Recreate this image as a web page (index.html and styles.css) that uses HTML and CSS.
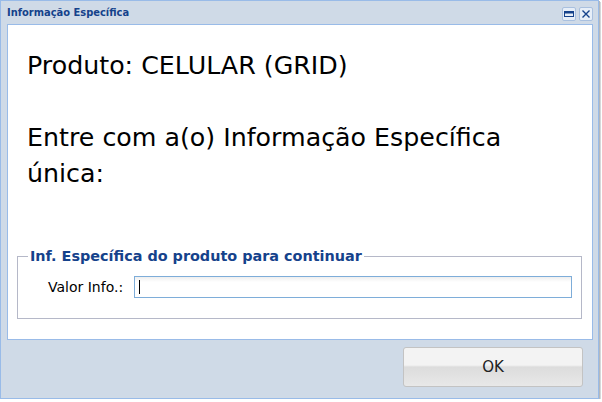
FILE: index.html
```html
<!DOCTYPE html>
<html>
<head>
<meta charset="utf-8">
<link rel="stylesheet" href="styles.css">
</head>
<body>
<div class="window">
  <div class="titlebar">
    <span class="title">Informação Específica</span>
    <div class="tools">
      <span class="tool"><svg width="12" height="12" viewBox="0 0 12 12"><rect x="1.5" y="3.5" width="9" height="5" fill="none" stroke="#15428b" stroke-width="1"/><rect x="1.5" y="3.5" width="9" height="2" fill="#15428b"/></svg></span>
      <span class="tool"><svg width="12" height="12" viewBox="0 0 12 12"><path d="M2.5 2.5 L9.5 9.5 M9.5 2.5 L2.5 9.5" stroke="#15428b" stroke-width="1.4" fill="none"/></svg></span>
    </div>
  </div>
  <div class="panel">
    <p class="big first">Produto: CELULAR (GRID)</p>
    <p class="big second">Entre com a(o) Informação Específica única:</p>
    <fieldset class="fs">
      <legend>Inf. Específica do produto para continuar</legend>
      <div class="row">
        <label class="lbl">Valor Info.:</label>
        <div class="input"><span class="caret"></span></div>
      </div>
    </fieldset>
  </div>
  <div class="footer">
    <button class="btn">OK</button>
  </div>
</div>
</body>
</html>
```
FILE: styles.css
```css
html, body {
  margin: 0;
  padding: 0;
  background: #ffffff;
}
.window {
  width: 599px;
  height: 399px;
  box-sizing: border-box;
  border: 1px solid #99bbe8;
  background: #cfdae7;
  display: flex;
  flex-direction: column;
  box-shadow: 1px 1px 0 #b4b8bd, 2px 2px 0 #d6d8da;
  font-family: "DejaVu Sans Condensed", "DejaVu Sans", sans-serif;
}
.titlebar {
  height: 23px;
  display: flex;
  align-items: center;
  justify-content: space-between;
  padding: 0 5px 0 6px;
}
.title {
  font-size: 11px;
  font-weight: bold;
  color: #15428b;
  margin-top: -1px;
}
.tools {
  display: flex;
  gap: 3px;
  margin-top: 2px;
}
.tool {
  width: 14px;
  height: 14px;
  box-sizing: border-box;
  border: 1px solid #a9c0df;
  border-radius: 2px;
  background: #e6eef8;
  display: flex;
  align-items: center;
  justify-content: center;
}
.tool svg { width: 12px; height: 12px; }
.panel {
  margin: 0 5px 0 6px;
  height: 316px;
  box-sizing: border-box;
  border: 1px solid #99bbe8;
  background: #ffffff;
  padding: 0 10px 0 9px;
  display: flex;
  flex-direction: column;
}
.big {
  margin: 0;
  padding-left: 10px;
  font-size: 25.3px;
  line-height: 36px;
  color: #000000;
  font-family: "DejaVu Sans", sans-serif;
}
.first { margin-top: 23px; }
.second { margin-top: 36px; width: 500px; }
.fs {
  margin: 56px 0 0 0;
  padding: 0;
  height: 71px;
  box-sizing: border-box;
  border: 1px solid #b5b8c8;
  min-width: 0;
  flex-shrink: 0;
}
.fs legend {
  font-family: "DejaVu Sans", sans-serif;
  font-size: 14.4px;
  font-weight: bold;
  color: #15428b;
  padding: 0 2px;
  margin-left: 10px;
}
.row {
  display: flex;
  align-items: center;
  margin-top: 12px;
  padding-left: 30px;
}
.lbl {
  font-family: "DejaVu Sans", sans-serif;
  font-size: 14px;
  color: #000000;
  width: 86px;
}
.input {
  width: 438px;
  height: 22px;
  box-sizing: border-box;
  border: 1px solid #7eadd9;
  background: linear-gradient(#eeeeee, #ffffff 5px);
  position: relative;
}
.caret {
  position: absolute;
  left: 4px;
  top: 3px;
  width: 1px;
  height: 14px;
  background: #000000;
}
.footer {
  flex: 1;
  display: flex;
  justify-content: flex-end;
  align-items: flex-start;
  padding: 7px 15px 0 0;
}
.btn {
  width: 180px;
  height: 40px;
  border: 1px solid #c3c3c3;
  border-radius: 3px;
  background: linear-gradient(#f3f3f3 0%, #f3f3f3 45%, #dcdcdc 50%, #e8e8e8 100%);
  font-family: "DejaVu Sans", sans-serif;
  font-size: 15px;
  color: #222222;
  padding: 0;
}
```
